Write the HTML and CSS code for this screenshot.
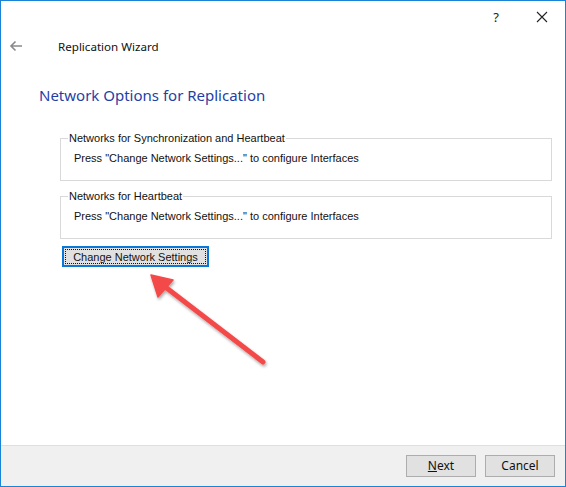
FILE: index.html
```html
<!DOCTYPE html>
<html>
<head>
<meta charset="utf-8">
<link rel="stylesheet" href="styles.css">
</head>
<body>
<div class="window">
  <div class="titlebar">
    <span class="tb-help">?</span>
    <span class="tb-close">
      <svg width="12" height="12" viewBox="0 0 12 12"><path d="M1 1 L11 11 M11 1 L1 11" stroke="#222" stroke-width="1.1" fill="none"/></svg>
    </span>
  </div>
  <div class="header">
    <span class="back">
      <svg width="14" height="12" viewBox="0 0 14 12"><path d="M13 6 H2 M6.5 1.5 L2 6 L6.5 10.5" stroke="#8a8a8a" stroke-width="1.6" fill="none"/></svg>
    </span>
    <span class="wiz-title">Replication Wizard</span>
  </div>
  <div class="content">
    <h1 class="heading">Network Options for Replication</h1>
    <div class="groups">
      <fieldset class="group">
        <legend>Networks for Synchronization and Heartbeat</legend>
        <div class="group-text">Press "Change Network Settings..." to configure Interfaces</div>
      </fieldset>
      <fieldset class="group">
        <legend>Networks for Heartbeat</legend>
        <div class="group-text">Press "Change Network Settings..." to configure Interfaces</div>
      </fieldset>
      <div class="btn-row">
        <button class="btn-change"><span class="focus">Change Network Settings</span></button>
      </div>
    </div>
    <svg class="arrow" width="140" height="110" viewBox="0 0 140 110">
      <defs>
        <filter id="sh" x="-20%" y="-20%" width="140%" height="140%">
          <feGaussianBlur in="SourceAlpha" stdDeviation="1.5"/>
          <feOffset dx="1" dy="2" result="b"/>
          <feComponentTransfer><feFuncA type="linear" slope="0.35"/></feComponentTransfer>
          <feMerge><feMergeNode/><feMergeNode in="SourceGraphic"/></feMerge>
        </filter>
      </defs>
      <g filter="url(#sh)">
        <path d="M121 94 L22 18" stroke="#f44a4a" stroke-width="5" stroke-linecap="round" fill="none"/>
        <path d="M9 7 L31 12 L16 29 Z" fill="#f44a4a" stroke="#f44a4a" stroke-width="1.5" stroke-linejoin="round"/>
      </g>
    </svg>
  </div>
  <div class="footer">
    <button class="btn"><span class="ul">N</span>ext</button>
    <button class="btn">Cancel</button>
  </div>
</div>
</body>
</html>
```
FILE: styles.css
```css
html, body {
  margin: 0;
  padding: 0;
  background: #fff;
}
.window {
  width: 566px;
  height: 487px;
  box-sizing: border-box;
  border: 1px solid #1883d7;
  display: flex;
  flex-direction: column;
  font-family: "Noto Sans", "Open Sans", sans-serif;
  color: #000;
  background: #fff;
}
.titlebar {
  height: 31px;
  display: flex;
  justify-content: flex-end;
  align-items: center;
}
.tb-help {
  font-size: 13px;
  width: 46px;
  text-align: center;
  color: #222;
}
.tb-close {
  width: 46px;
  display: flex;
  justify-content: center;
  align-items: center;
}
.header {
  height: 28px;
  display: flex;
  align-items: center;
}
.back {
  width: 14px;
  margin-left: 8px;
  display: flex;
}
.wiz-title {
  font-size: 11.6px;
  margin-left: 35px;
  color: #111;
}
.content {
  flex: 1;
  position: relative;
}
.heading {
  margin: 25px 0 0 38px;
  font-weight: normal;
  font-size: 15px;
  color: #1f3fa5;
  line-height: 20px;
}
.groups {
  margin: 27px 13px 0 59px;
  font-family: "Liberation Sans", Arial, sans-serif;
  font-size: 11px;
}
.group {
  margin: 0 0 9px 0;
  border: 1px solid #d9d9d9;
  padding: 0;
  height: 47px;
  box-sizing: content-box;
}
.group legend {
  padding: 0 1px;
  margin-left: 7px;
  line-height: 13px;
  color: #111;
}
.group-text {
  padding: 7px 0 0 13px;
  color: #111;
  line-height: 13px;
}
.btn-row {
  display: flex;
  margin-top: -2px;
  margin-left: 2px;
}
.btn-change {
  width: 147px;
  height: 21px;
  padding: 1px;
  border: 2px solid #0a78d7;
  background: #e1e1e1;
  font-family: "Liberation Sans", Arial, sans-serif;
  font-size: 11px;
  color: #111;
  display: flex;
}
.btn-change .focus {
  flex: 1;
  border: 1px dotted #111;
  display: flex;
  align-items: center;
  justify-content: center;
  line-height: 12px;
}
.arrow {
  position: absolute;
  left: 141px;
  top: 208px;
}
.footer {
  height: 41px;
  box-sizing: border-box;
  background: #f0f0f0;
  border-top: 1px solid #dfdfdf;
  display: flex;
  justify-content: flex-end;
  align-items: flex-start;
  padding: 9px 10px 0 0;
  gap: 9px;
}
.btn {
  width: 70px;
  height: 22px;
  background: #e1e1e1;
  border: 1px solid #adadad;
  font-family: "Noto Sans", "Open Sans", sans-serif;
  font-size: 12px;
  color: #111;
  padding: 0;
  line-height: 18px;
}
.ul {
  text-decoration: underline;
}
```
